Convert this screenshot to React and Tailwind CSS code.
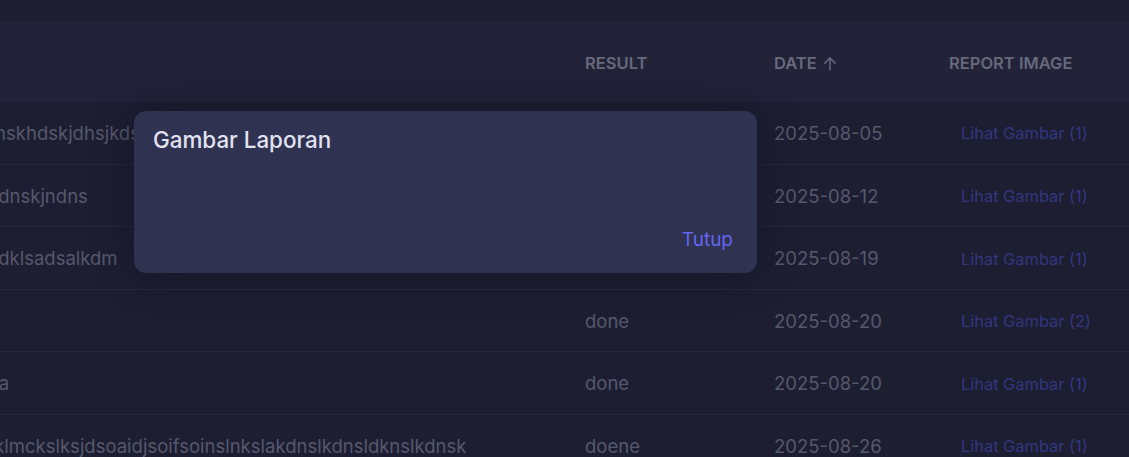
import React from 'react';

// Laporan table with the "Gambar Laporan" dialog open on top
const rows = [
  { desc: 'ohskhdskjdhsjkdsjkdhsjkdhs', result: '', date: '2025-08-05', images: 1 },
  { desc: 'lkdnskjndns', result: '', date: '2025-08-12', images: 1 },
  { desc: 'lkdklsadsalkdm', result: '', date: '2025-08-19', images: 1 },
  { desc: '', result: 'done', date: '2025-08-20', images: 2 },
  { desc: 'lka', result: 'done', date: '2025-08-20', images: 1 },
  { desc: 'kklmckslksjdsoaidjsoifsoinslnkslakdnslkdnsldknslkdnsk', result: 'doene', date: '2025-08-26', images: 1 },
];

function ArrowUp() {
  return (
    <svg width="18" height="18" viewBox="0 0 24 24" fill="none" stroke="currentColor" strokeWidth="2" strokeLinecap="round" strokeLinejoin="round">
      <path d="M12 20V4" />
      <path d="M5 11l7-7 7 7" />
    </svg>
  );
}

export default function App() {
  return (
    <div
      className="relative w-[1129px] h-[457px] overflow-hidden bg-[#1d1e32]"
      style={{ fontFamily: 'Inter, "Noto Sans", sans-serif' }}
    >
      <div className="h-[22px] bg-[#1e1f33]" />

      {/* header */}
      <div className="h-[80px] pt-[3px] bg-[#222338] grid grid-cols-[585px_189px_175px_1fr] items-center text-[16.5px] font-semibold uppercase text-[#67697d]">
        <div />
        <div>Result</div>
        <div className="flex items-center gap-1">
          Date <ArrowUp />
        </div>
        <div>Report Image</div>
      </div>

      {/* rows */}
      <div>
        {rows.map((r, i) => (
          <div
            key={i}
            className="h-[62.6px] border-b border-[#26283d] grid grid-cols-[585px_189px_175px_1fr] items-center text-[18.5px] text-[#56586c] whitespace-nowrap"
          >
            <div className="pt-[2px]">
              <span className="-ml-[16px]">{r.desc}</span>
            </div>
            <div className="pt-[2px]">{r.result}</div>
            <div className="pt-[2px]">{r.date}</div>
            <div className="pt-[2px] pl-3 text-[16.4px] text-[#33367f]">Lihat Gambar ({r.images})</div>
          </div>
        ))}
      </div>

      {/* dialog */}
      <div className="absolute left-[134px] top-[111px] w-[623px] h-[162px] rounded-xl bg-[#2f3250] shadow-[0_0_40px_rgba(10,10,25,0.45)] flex flex-col justify-between pl-[19px] pr-6 pt-[12px] pb-[19px]">
        <div className="text-[22.4px] font-medium text-[#e1e2f2]">Gambar Laporan</div>
        <div className="flex justify-end">
          <button className="text-[19px] text-[#6366f1]">Tutup</button>
        </div>
      </div>
    </div>
  );
}
